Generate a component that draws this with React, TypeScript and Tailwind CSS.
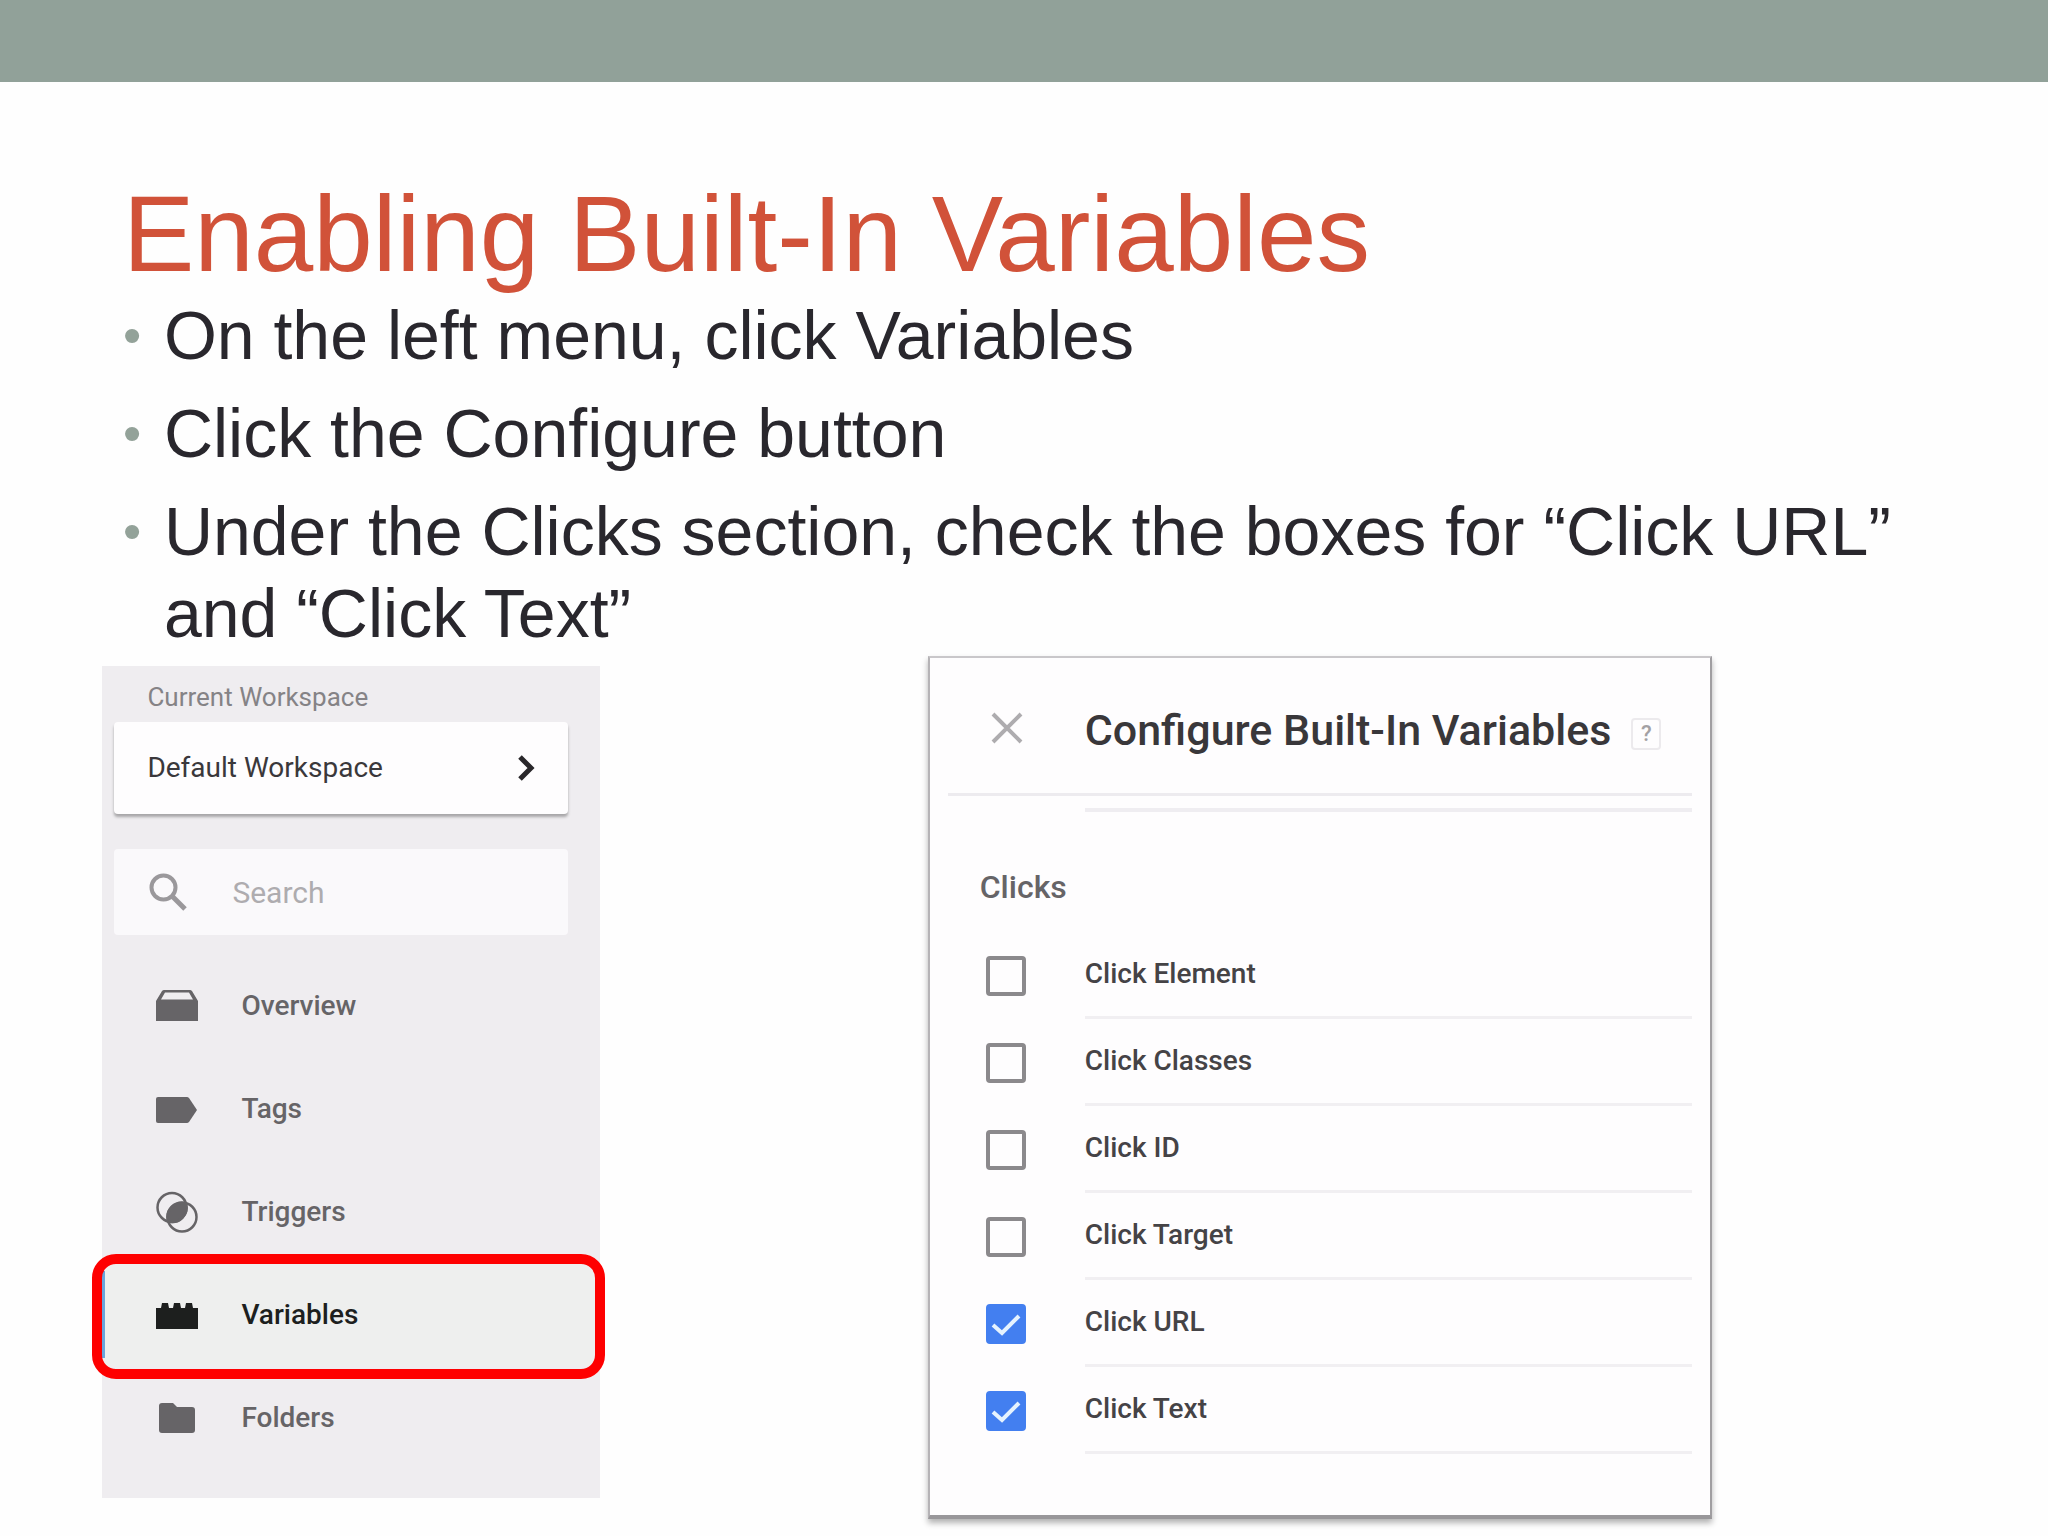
import { useState } from "react";

const steps = [
  "On the left menu, click Variables",
  "Click the Configure button",
  "Under the Clicks section, check the boxes for “Click URL” and “Click Text”",
];

const OverviewIcon = () => (
  <svg viewBox="0 0 42 42" className="w-[42px] h-[42px]" fill="currentColor">
    <path d="M0 16 6 6Q7 5 8 5H34Q35 5 36 6L42 16V36H0Z M9 7.5 5 14.5H37L33 7.5Z" fillRule="evenodd" />
  </svg>
);

const TagsIcon = () => (
  <svg viewBox="0 0 42 42" className="w-[42px] h-[42px]" fill="currentColor">
    <path d="M2 9H31Q32 9 33 10L41 22 33 34Q32 35 31 35H2Q0 35 0 33V11Q0 9 2 9Z" />
  </svg>
);

const TriggersIcon = () => (
  <svg viewBox="0 0 42 42" className="w-[42px] h-[42px]" fill="none" stroke="currentColor" strokeWidth="2.5">
    <circle cx="16" cy="16.5" r="14.5" />
    <circle cx="26" cy="26" r="14.5" />
    <path d="M30 12.6A14.5 14.5 0 0 1 12 30.4A14.5 14.5 0 0 1 30 12.6Z" fill="currentColor" />
  </svg>
);

const VariablesIcon = () => (
  <svg viewBox="0 0 42 42" className="w-[42px] h-[42px]" fill="currentColor">
    <path d="M0 14H5L6 9H12L13 14H17L18 9H24L25 14H29L30 9H36L37 14H42V35H0Z" />
  </svg>
);

const FoldersIcon = () => (
  <svg viewBox="0 0 42 42" className="w-[42px] h-[42px]" fill="currentColor">
    <path d="M6 6H17L21 10H36Q39 10 39 13V33Q39 36 36 36H6Q3 36 3 33V9Q3 6 6 6Z" />
  </svg>
);

const menu = [
  { name: "Overview", icon: OverviewIcon },
  { name: "Tags", icon: TagsIcon },
  { name: "Triggers", icon: TriggersIcon },
  { name: "Variables", icon: VariablesIcon },
  { name: "Folders", icon: FoldersIcon },
];

const clickVariables = ["Click Element", "Click Classes", "Click ID", "Click Target", "Click URL", "Click Text"];

function SideMenu() {
  const active = "Variables";

  return (
    <aside className="w-[24.3%] ml-[5%] mt-[10px] pt-4 pb-[29px] bg-[#efedf0]">
      <p id="workspace" className="pl-[45px] mb-[10px] text-[26px] leading-[30px] text-[#858386]">Current Workspace</p>
      <div className="pl-3 pr-8">
        <button
          aria-describedby="workspace"
          className="flex items-center justify-between w-full h-[92px] pl-[33px] pr-[33px] rounded bg-[#fefdfe] text-[28px] text-[#3a383b] shadow-[0_3px_3px_rgba(0,0,0,0.3)]"
        >
          Default Workspace
          <svg viewBox="0 0 18 26" className="w-[18px] h-[26px]" fill="none" stroke="#29272a" strokeWidth="5">
            <path d="M3 2 14 13 3 24" />
          </svg>
        </button>
        <label className="flex items-center w-full h-[86px] mt-[35px] pl-[35px] rounded bg-[#faf9fb]">
          <svg viewBox="0 0 38 38" className="w-[38px] h-[38px] shrink-0" fill="none" stroke="#9a989b" strokeWidth="4">
            <circle cx="14.5" cy="14.5" r="12" />
            <path d="M23 23 36 36" strokeWidth="5" />
          </svg>
          <input
            type="search"
            aria-label="Search"
            placeholder="Search"
            className="w-full min-w-0 ml-[45px] bg-transparent outline-none text-[30px] placeholder:text-[#aeacaf]"
          />
        </label>
      </div>
      <nav className="mt-[19px]">
        {menu.map(({ name, icon: Icon }) => (
          <a
            key={name}
            href={`#${name.toLowerCase()}`}
            className={
              name === active
                ? "relative flex items-center gap-[43px] h-[103px] pl-[54px] bg-[#eeefee] text-[28px] font-medium text-[#1d1f1e]"
                : "flex items-center gap-[43px] h-[103px] pl-[54px] text-[28px] font-medium text-[#666467]"
            }
          >
            <Icon />
            {name}
            {name === active && (
              <>
                <span className="absolute left-0 inset-y-2 w-[3px] bg-[#69a5dc]" />
                {/* red marker drawn around the selected entry */}
                <span className="absolute -left-[10px] -right-[5px] -top-[9px] -bottom-[13px] rounded-3xl border-[10px] border-[#fe0000]" />
              </>
            )}
          </a>
        ))}
      </nav>
    </aside>
  );
}

function ConfigurePanel() {
  const [checked, setChecked] = useState(["Click URL", "Click Text"]);

  const toggle = (name: string) => {
    setChecked((prev) => (prev.includes(name) ? prev.filter((n) => n !== name) : [...prev, name]));
  };

  return (
    <section className="w-[38.3%] px-[18px] pb-[61px] border-2 border-t-[#c9c7ca] border-l-[#b5b3b6] border-r-[#a09ea1] border-b-4 border-b-[#99979a] bg-[#fefdfe] shadow-[0_4px_6px_rgba(0,0,0,0.3)]">
      <header className="flex items-center pt-12 pb-[39px] pl-[43px] border-b-3 border-[#edebef]">
        <button aria-label="Close" className="mb-1">
          <svg viewBox="0 0 32 32" className="w-8 h-8" fill="none" stroke="#aeacaf" strokeWidth="4">
            <path d="M2 2 30 30M30 2 2 30" />
          </svg>
        </button>
        <h2 className="ml-[62px] text-[43px] leading-[48px] font-medium whitespace-nowrap text-[#39373a]">
          Configure Built-In Variables
        </h2>
        <button aria-label="Help" className="w-[30px] h-[32px] mt-2 ml-5 rounded border-2 border-[#eceaed] text-[22px] leading-[28px] font-medium text-[#a3a1a4]">
          ?
        </button>
      </header>
      <div className="h-1 mt-3 ml-[137px] bg-[#efedf1]" />
      <h3 className="mt-[57px] mb-[27px] pl-8 text-[32px] leading-[36px] font-medium text-[#666467]">Clicks</h3>
      <ul>
        {clickVariables.map((name) => (
          <li key={name}>
            <label className="flex items-center h-[87px] pl-[38px]">
              <span className="grid w-10 mr-[59px] shrink-0">
                <input
                  type="checkbox"
                  checked={checked.includes(name)}
                  onChange={() => toggle(name)}
                  className="peer col-start-1 row-start-1 appearance-none w-10 h-10 rounded border-4 border-[#8b898c] checked:border-[#437ff0] checked:bg-[#437ff0]"
                />
                <svg viewBox="0 0 40 40" className="hidden peer-checked:block pointer-events-none col-start-1 row-start-1 w-10 h-10" fill="none" stroke="#e6f3fe" strokeWidth="4">
                  <path d="M7 21 16 29 33 12" />
                </svg>
              </span>
              <span className="flex items-center w-full h-full border-b-3 border-[#f1eff2] text-[28px] font-medium text-[#454346]">{name}</span>
            </label>
          </li>
        ))}
      </ul>
    </section>
  );
}

export default function App() {
  return (
    <div className="min-h-screen pb-4 bg-[#fefefe]">
      <div className="h-[82px] bg-[#91a199]" />
      <div className="px-[6%] pt-[92px] font-['Liberation_Sans',Arial,sans-serif]">
        <h1 className="text-[107px] leading-[120px] text-[#d15239]">Enabling Built-In Variables</h1>
        <ul className="flex flex-col gap-4 text-[68px] leading-[82px] text-[#29272d]">
          {steps.map((step) => (
            <li key={step} className="flex">
              <span className="w-[41px] shrink-0 text-[52px] text-[#93a299]">•</span>
              <span>{step}</span>
            </li>
          ))}
        </ul>
      </div>
      <main className="flex items-start gap-[16%] mt-[2px] font-[Roboto,sans-serif]">
        <SideMenu />
        <ConfigurePanel />
      </main>
    </div>
  );
}
